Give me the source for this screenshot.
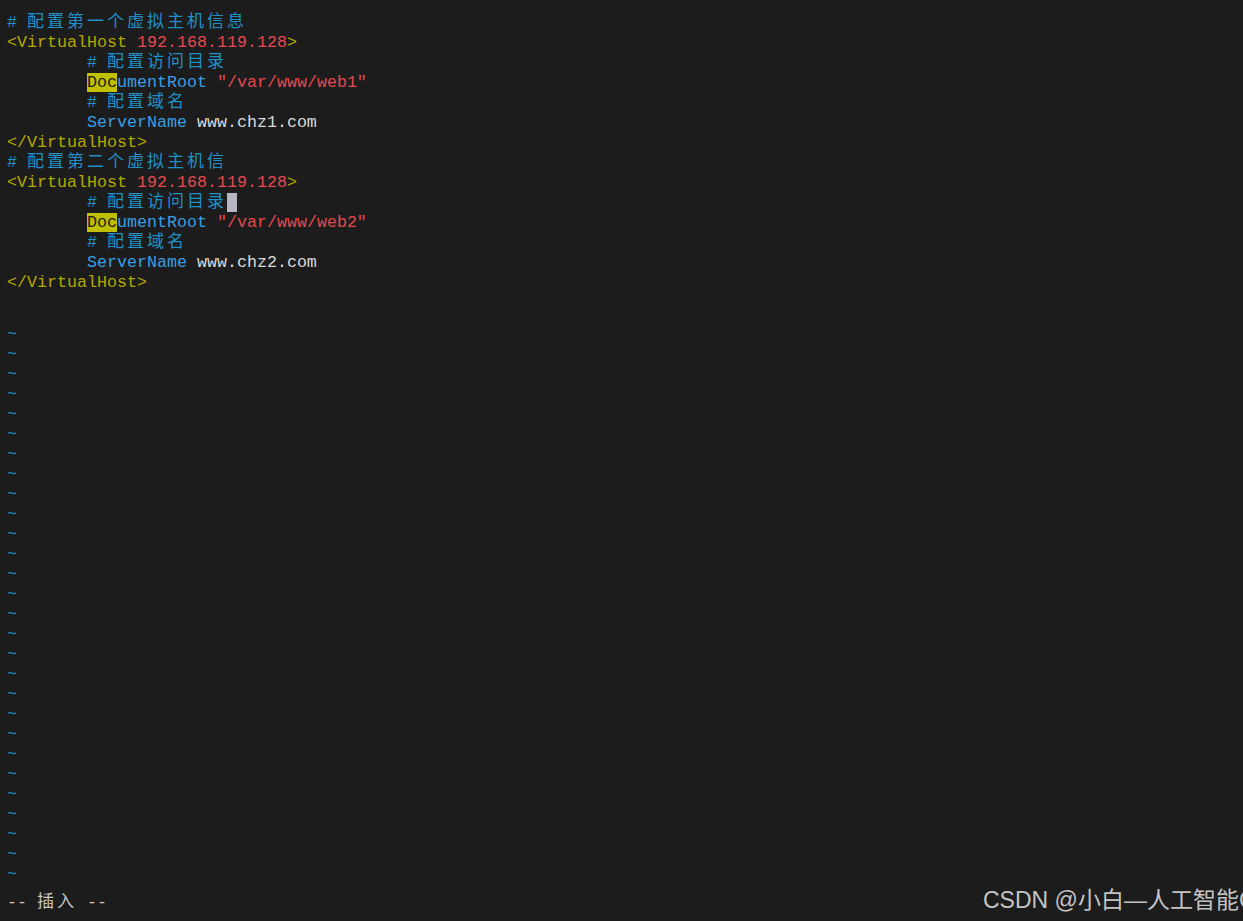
import React from 'react';

type Seg = { t: string; c?: string; cjk?: boolean };

const COMMENT = 'text-[#2190c6]';
const TAG = 'text-[#b4a800]';
const RED = 'text-[#e5484f]';
const KEY = 'text-[#3a9ee0]';
const PLAIN = 'text-[#dadada]';

const comment = (indent: string, words: string): Seg[] => [
  { t: indent + '# ', c: COMMENT },
  { t: words, c: COMMENT, cjk: true },
];

const hostBlock = (n: string, title: string, cursor: boolean): Seg[][] => [
  comment('', title),
  [
    { t: '<VirtualHost ', c: TAG },
    { t: '192.168.119.128', c: RED },
    { t: '>', c: TAG },
  ],
  [...comment('        ', '配置访问目录'), ...(cursor ? [{ t: ' ', c: 'bg-[#b6b6c4]' }] : [])],
  [
    { t: '        ' },
    { t: 'Doc', c: 'bg-[#c0c000] text-[#1c1c1c]' },
    { t: 'umentRoot ', c: KEY },
    { t: `"/var/www/web${n}"`, c: RED },
  ],
  comment('        ', '配置域名'),
  [
    { t: '        ' },
    { t: 'ServerName ', c: KEY },
    { t: `www.chz${n}.com`, c: PLAIN },
  ],
  [{ t: '</VirtualHost>', c: TAG }],
];

const lines: Seg[][] = [
  ...hostBlock('1', '配置第一个虚拟主机信息', false),
  ...hostBlock('2', '配置第二个虚拟主机信', true),
  [],
  [],
];

const Line: React.FC<{ segs: Seg[] }> = ({ segs }) => {
  const mixed = segs.some(s => s.cjk);
  // latin-only rows sit a little lower in the cell, like the terminal font
  const row = mixed ? 'leading-[20px]' : 'pt-[6px] leading-[14px]';
  return (
    <div className={`h-[20px] whitespace-pre ${row}`}>
      {segs.map((s, i) =>
        s.cjk ? (
          <span
            key={i}
            className={`${s.c ?? ''} text-[17px] tracking-[3px]`}
            style={{ fontFamily: '"Noto Sans CJK SC", sans-serif' }}
          >
            {s.t}
          </span>
        ) : (
          <span key={i} className={s.c ?? ''}>
            {s.t}
          </span>
        )
      )}
    </div>
  );
};

const App: React.FC = () => {
  const tildes = Array.from({ length: 28 });

  return (
    <div
      className="relative w-[1243px] h-[921px] overflow-hidden bg-[#1c1c1c] pt-[10px] pl-[7px] text-[16.67px]"
      style={{ fontFamily: '"Liberation Mono", "Noto Sans CJK SC", monospace' }}
    >
      {lines.map((segs, i) => (
        <Line key={i} segs={segs} />
      ))}
      {tildes.map((_, i) => (
        <div key={`t${i}`} className="h-[20px] leading-[10px] text-[#1f8fc9]">
          ~
        </div>
      ))}
      <Line
        segs={[
          { t: '-- ', c: 'text-[#c8c8c8]' },
          { t: '插入', c: 'text-[#c8c8c8]', cjk: true },
          { t: ' --', c: 'text-[#c8c8c8]' },
        ]}
      />

      {/* watermark */}
      <div
        className="absolute left-[983px] top-[884px] whitespace-nowrap text-[23px] leading-[32px] text-[#c4c4c4]"
        style={{ fontFamily: '"Liberation Sans", "Noto Sans CJK SC", sans-serif' }}
      >
        CSDN @小白—人工智能C
      </div>
    </div>
  );
};

export default App;
